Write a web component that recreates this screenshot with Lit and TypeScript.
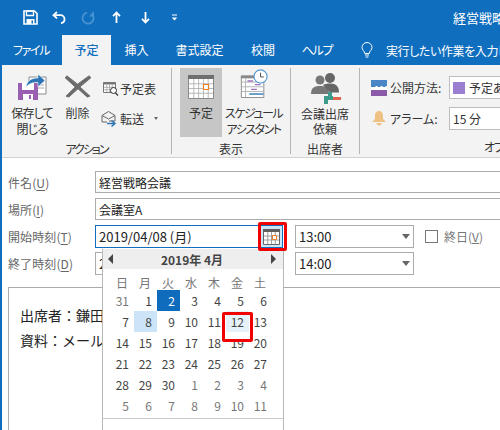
import { LitElement, html, css, svg } from "lit";
import { customElement } from "lit/decorators.js";

const calGrid = (x: number, y: number, w: number, h: number, cols: number, rows: number) => {
  const cw = w / cols, ch = h / rows;
  const lines = [];
  for (let i = 1; i < cols; i++) lines.push(svg`<line x1=${x + i * cw} y1=${y} x2=${x + i * cw} y2=${y + h} />`);
  for (let i = 1; i < rows; i++) lines.push(svg`<line x1=${x} y1=${y + i * ch} x2=${x + w} y2=${y + i * ch} />`);
  return lines;
};

const WEEK = ["日", "月", "火", "水", "木", "金", "土"];
const DAYS: [number, boolean][] = [
  [31, false],
  ...Array.from({ length: 30 }, (_, i) => [i + 1, true] as [number, boolean]),
  ...Array.from({ length: 11 }, (_, i) => [i + 1, false] as [number, boolean]),
];

@customElement("app-root")
export class AppRoot extends LitElement {
  static styles = css`
    :host {
      display: block; position: relative; width: 500px; height: 430px; overflow: hidden; background: #fff;
      font-family: "Noto Sans CJK JP", "Noto Sans", sans-serif; font-size: 12px; color: #333;
      font-feature-settings: "palt";
    }
    svg { display: block; flex: none; }
    .app { display: flex; flex-direction: column; height: 430px; }
    .top { background: #106ebe; color: #fff; flex: none; }
    .qat { height: 35px; display: flex; align-items: center; position: relative; }
    .qat svg { margin-top: -1px; }
    .q1 { margin-left: 23px; } .q2 { margin-left: 14px; } .q3 { margin-left: 14px; }
    .q4 { margin-left: 16px; } .q5 { margin-left: 20px; } .q6 { margin-left: 21px; }
    .title { margin-left: auto; font-size: 13px; white-space: nowrap; width: 47px; }
    .tabs { height: 30px; display: flex; align-items: center; }
    .tab { height: 30px; display: flex; align-items: center; justify-content: center; flex: none; line-height: 1; }
    .tab.on { background: #f3f3f3; color: #106ebe; font-weight: 500; }
    .tab.kana { letter-spacing: -1.3px; }
    .tell { display: flex; align-items: center; margin-left: 16px; white-space: nowrap; gap: 13px; letter-spacing: -.4px; }
    .body { flex: 1; display: flex; flex-direction: column; border-left: 2px solid #106ebe; min-height: 0; }
    .ribbon { height: 93px; flex: none; background: #f3f3f3; border-bottom: 1px solid #d2d2d2; box-sizing: border-box; display: flex; padding-top: 3px; color: #333; }
    .group { flex: none; height: 86px; border-right: 1px solid #b5b5b5; display: flex; flex-direction: column; box-sizing: border-box; }
    .g1 { width: 170px; } .g2 { width: 119px; } .g3 { width: 69px; }
    .group.last { border-right: 0; flex: 1; overflow: hidden; }
    .gmain { height: 69px; display: flex; }
    .glabel { margin-top: 5px; text-align: center; line-height: 14px; font-size: 12px; white-space: nowrap; }
    .glabel.kana { letter-spacing: -2px; }
    .glabel.opt-l { text-align: left; padding-left: 124px; letter-spacing: -1px; }
    .big { display: flex; flex-direction: column; align-items: center; height: 69px; box-sizing: border-box; line-height: 16px; text-align: center; white-space: nowrap; flex: none; }
    .big .ic { height: 33px; display: flex; align-items: flex-end; margin-bottom: 4px; }
    .big.sel { background: #c6c6c6; }
    .b-save { width: 48px; margin-left: 6px; letter-spacing: -.8px; }
    .b-del { width: 35px; margin-left: 4px; }
    .b-del svg { margin-bottom: 3px; }
    .b-cal { width: 42px; margin-left: 8px; }
    .b-cal .ic { height: 31px; margin-bottom: 6px; }
    .b-sch { width: 63px; }
    .b-sch .ic { height: 30px; margin-bottom: 7px; }
    .b-sch .t { letter-spacing: -1.5px; }
    .b-att { width: 68px; line-height: 15px; }
    .b-att .ic { height: 36px; margin-bottom: 2px; }
    .smalls { display: flex; flex-direction: column; margin-left: 8px; padding-top: 5px; }
    .small { display: flex; align-items: center; height: 30px; }
    .small span { margin-left: 1px; }
    .small.fw { margin-left: -2px; }
    .small.fw span { margin-left: 2px; }
    .tri-s { margin-left: 10px; width: 0; height: 0; border-left: 2.5px solid transparent; border-right: 2.5px solid transparent; border-top: 3px solid #666; }
    .opts { padding-left: 11px; padding-top: 8px; display: flex; flex-direction: column; gap: 8px; height: 69px; box-sizing: border-box; }
    .opt { display: flex; align-items: center; height: 23px; white-space: nowrap; }
    .opt .lb { width: 59px; margin-left: 3px; flex: none; }
    .drop { width: 120px; height: 23px; border: 1px solid #bdbdbd; background: #fff; box-sizing: border-box; display: flex; align-items: center; padding-left: 3px; flex: none; }
    .swatch { width: 12px; height: 12px; background: #9a7fd0; margin-right: 4px; flex: none; }
    .form { padding: 13px 0 0 6px; flex: 1; display: flex; flex-direction: column; min-height: 0; }
    .row { display: flex; align-items: center; margin-bottom: 5px; }
    .row.r3 { margin-bottom: 4px; }
    .row.r4 { margin-bottom: 0; }
    .lab { width: 87px; flex: none; color: #666; font-size: 12px; letter-spacing: 0.1px; }
    .lab u { text-underline-offset: 2px; }
    .field { height: 22px; border: 1px solid #ababab; box-sizing: border-box; flex: 1; margin-right: -20px; display: flex; align-items: center; padding-left: 3px; color: #222; font-size: 12px; }
    .date { flex: none; width: 188px; height: 23px; position: relative; color: #222; padding-left: 3px; font-size: 13px; display: flex; align-items: center; box-sizing: border-box; border: 1px solid #ababab; }
    .date.focus { border-color: #106ebe; }
    .calbtn { position: absolute; right: 0; top: 0; width: 22px; height: 21px; background: #cce4f7; display: flex; align-items: center; justify-content: center; }
    .combo { margin-left: 12px; width: 119px; height: 23px; border: 1px solid #ababab; box-sizing: border-box; display: flex; align-items: center; padding-left: 3px; color: #222; flex: none; font-size: 13px; justify-content: space-between; padding-right: 3px; }
    .tri { width: 0; height: 0; border-left: 4.5px solid transparent; border-right: 4.5px solid transparent; border-top: 5px solid #666; }
    .check { margin-left: 11px; width: 13px; height: 13px; border: 1px solid #777; box-sizing: border-box; flex: none; }
    .allday { margin-left: 6px; color: #777; white-space: nowrap; }
    .note { margin-top: 12px; flex: 1; margin-right: -20px; border: 1px solid #ababab; border-bottom: 0; padding: 15px 11px 0; font-size: 14px; line-height: 25px; color: #222; white-space: nowrap; font-feature-settings: normal; }
    .popup { position: absolute; left: 102px; top: 249px; width: 182px; height: 200px; background: #fff; border: 1px solid #b8b8b8; border-top: 0; box-sizing: border-box; color: #444; }
    .phead { height: 20px; background: #eee; display: flex; align-items: center; justify-content: space-between; padding: 0 7px 0 5px; font-weight: 700; font-size: 12px; color: #444; }
    .la { border-top: 5px solid transparent; border-bottom: 5px solid transparent; border-right: 5px solid #444; width: 0; height: 0; }
    .ra { border-top: 5px solid transparent; border-bottom: 5px solid transparent; border-left: 5px solid #444; width: 0; height: 0; }
    .grid { display: grid; grid-template-columns: repeat(7, 23px); grid-auto-rows: 21px; margin-left: 8px; }
    .wk { height: 26px; display: flex; align-items: center; justify-content: flex-end; padding-right: 6px; color: #777; }
    .d { display: flex; align-items: center; justify-content: flex-end; padding-right: 5px; font-size: 12px; color: #444; }
    .d.off { color: #777; }
    .d.sel { background: #0f6cbd; color: #fff; }
    .d.today { background: #cce4f7; }
    .d.hov { background: #e5f1fb; }
    .foot { border-top: 1px solid #ccc; margin-top: 2px; }
    .red { position: absolute; border: 3px solid #f00000; border-radius: 2px; box-sizing: border-box; }
    .red1 { left: 258px; top: 222px; width: 29px; height: 29px; }
    .red2 { left: 222px; top: 312px; width: 31px; height: 30px; }
  `;

  render() {
    const tabs: [string, number, string][] = [["ファイル", 62, "kana"], ["予定", 49, "on"], ["挿入", 51, ""], ["書式設定", 75, ""], ["校閲", 52, ""], ["ヘルプ", 56, "kana"]];
    return html`
      <div class="app">
        <div class="top">
          <div class="qat">
            <svg class="q1" width="15" height="15" viewBox="0 0 15 15"><path d="M1 1h10.500L14 3.500V14H1z" fill="none" stroke="#fff" stroke-width="1.6"/><path d="M3.500 1h7v4.500h-7z" fill="none" stroke="#fff" stroke-width="1.300"/><path d="M3.500 9h8v5h-8z" fill="#fff"/><path d="M8.500 10.500h1.500v3h-1.500z" fill="#106ebe"/></svg>
            <svg class="q2" width="15" height="15" viewBox="0 0 15 15"><path d="M5 2 1.500 5.200 5 8.400" fill="none" stroke="#fff" stroke-width="1.800"/><path d="M2 5.200h6.500a4 4 0 0 1 4 4 3.800 3.800 0 0 1-3.500 3.800" fill="none" stroke="#fff" stroke-width="1.800"/></svg>
            <svg class="q3" width="15" height="15" viewBox="0 0 15 15"><path d="M9 3a5.500 5.500 0 1 1-4.500 .5" transform="rotate(20 7.500 7.500)" fill="none" stroke="#4a93d1" stroke-width="1.800"/><path d="M13 1v5.500H8z" fill="#4a93d1"/></svg>
            <svg class="q4" width="9" height="13" viewBox="0 0 9 13"><path d="M4.500 12V2M1 5.200 4.500 1.500 8 5.200" fill="none" stroke="#fff" stroke-width="1.800"/></svg>
            <svg class="q5" width="9" height="13" viewBox="0 0 9 13"><path d="M4.500 1v10M1 7.800 4.500 11.500 8 7.800" fill="none" stroke="#fff" stroke-width="1.800"/></svg>
            <svg class="q6" width="7" height="7" viewBox="0 0 7 7"><path d="M1 .5h5v1H1z" fill="#fff"/><path d="M.8 3.500h5.400L3.500 6.500z" fill="#fff"/></svg>
            <div class="title">経営戦略会議</div>
          </div>
          <div class="tabs">
            ${tabs.map(([t, w, c]) => html`<div class="tab ${c}" style="width:${w}px">${t}</div>`)}
            <div class="tell">
              <svg width="12" height="16" viewBox="0 0 12 16"><path d="M3.800 11.500C3.500 9 1 8 1 5.500a5 5 0 0 1 10 0C11 8 8.500 9 8.200 11.500z" fill="none" stroke="#fff"/><path d="M4 13h4M4.500 15h3" stroke="#fff"/></svg>
              <span>実行したい作業を入力してください</span>
            </div>
          </div>
        </div>
        <div class="body">
          <div class="ribbon">
            <div class="group g1">
              <div class="gmain">
                <div class="big b-save">
                  <div class="ic">
                    <svg width="30" height="28" viewBox="0 0 30 28">
                      <path d="M12 4h17v17H12z" fill="#fff" stroke="#8a8a8a"/><path d="M20 9h7M20 12h7M20 15h7" stroke="#aaa"/>
                      <path d="M1 10h20v17H1z" fill="#9a5fb0"/><path d="M5 10h12v7H5z" fill="#fff"/><path d="M6 21h10v6H6z" fill="#fff"/><path d="M12 22h2v4h-2z" fill="#9a5fb0"/>
                      <path d="M9 14C10 7 15 5 21 5V1l7 6.500-7 6.500V9.500C16 9.500 13 10 9 14z" fill="#2e75b6" stroke="#fff" stroke-width=".6"/>
                    </svg>
                  </div>保存して<br>閉じる
                </div>
                <div class="big b-del">
                  <div class="ic"><svg width="30" height="24" viewBox="0 0 30 26"><path d="M3 2 14.500 11 27 2l2 2-12 10 11 10-3 1L15 16 5 25 2 24l10-10L1 4z" fill="#6b6b6b" stroke="#6b6b6b" stroke-linejoin="round"/></svg></div>削除
                </div>
                <div class="smalls">
                  <div class="small">
                    <svg width="16" height="15" viewBox="0 0 16 15"><path d="M.5 1.500h12v10H.5z" fill="#fff" stroke="#777"/><path d="M.5 1.500h12v2H.5z" fill="#777"/><g stroke="#999" stroke-width=".7">${calGrid(1, 4, 11, 7, 4, 3)}</g><circle cx="10.500" cy="9.500" r="3" fill="#fff" stroke="#333"/><path d="M12.500 12l2.500 2.500" stroke="#333" stroke-width="1.300"/></svg>
                    <span>予定表</span>
                  </div>
                  <div class="small fw">
                    <svg width="17" height="17" viewBox="0 0 17 17"><path d="M1 5.500 7.500 1.500 14 5.500V11H8M1 5.500V12h5" fill="none" stroke="#666"/><path d="M1 5.500 7.500 9 14 5.500" fill="none" stroke="#666"/><path d="M6 13.500h7.500M10.500 10.500l3.500 3-3.500 3" fill="none" stroke="#2e75b6" stroke-width="1.500"/></svg>
                    <span>転送</span>
                    <i class="tri-s"></i>
                  </div>
                </div>
              </div>
              <div class="glabel kana">アクション</div>
            </div>
            <div class="group g2">
              <div class="gmain">
                <div class="big sel b-cal">
                  <div class="ic">
                    <svg width="26" height="24" viewBox="0 0 26 24"><path d="M.5 .5h25v23H.5z" fill="#fff" stroke="#8a8a8a"/><path d="M0 0h26v4H0z" fill="#6f6f6f"/><g stroke="#aaa" stroke-width=".8">${calGrid(1, 4, 24, 19, 5, 4)}</g><path d="M15.500 9.500h5v5h-5z" fill="#fff" stroke="#e97f25" stroke-width="1.200"/></svg>
                  </div>予定
                </div>
                <div class="big b-sch">
                  <div class="ic">
                    <svg width="30" height="29" viewBox="0 0 30 31"><path d="M1.500 7.500h24v23h-24z" fill="#fff" stroke="#8a8a8a"/><path d="M1 7h25v3H1z" fill="#8a8a8a"/><path d="M1.500 14h24M1.500 19h24M1.500 24h24M6 10v20" stroke="#b0b0b0"/><path d="M8 12h6v1.500H8zM16 16h6v1.500h-6zM12 21h6v1.500h-6z" fill="#a070c0"/><path d="M10 26h15v1.500H10z" fill="#2e75b6"/><circle cx="22" cy="8" r="7" fill="#fff" stroke="#5b9bd5" stroke-width="1.300"/><path d="M22 4v4.500h3.500" fill="none" stroke="#444"/></svg>
                  </div><span class="t">スケジュール<br>アシスタント</span>
                </div>
              </div>
              <div class="glabel">表示</div>
            </div>
            <div class="group g3">
              <div class="gmain">
                <div class="big b-att">
                  <div class="ic">
                    <svg width="32" height="31" viewBox="0 0 32 31"><circle cx="11" cy="7" r="4.500" fill="#777"/><path d="M2 21c0-7 4-8 9-8s9 1 9 8z" fill="#777"/><circle cx="21" cy="5" r="5" fill="#666"/><path d="M14 12c2-1 4-1.500 7-1.500 6 0 9 3 9 9h-9z" fill="#666"/><path d="M15 23h4v-4h4v4h1v4h-5v4h-4z" fill="#3d9b8c"/><path d="M24 24h8v3h-8z" fill="#e0664b"/></svg>
                  </div>会議出席<br>依頼
                </div>
              </div>
              <div class="glabel">出席者</div>
            </div>
            <div class="group last">
              <div class="opts">
                <div class="opt">
                  <svg width="16" height="16" viewBox="0 0 16 16"><path d="M0 0h16v7H0z" fill="#4a86c5"/><path d="M0 7h16v3H0z" fill="#fff"/><path d="M0 10h16v6H0z" fill="#8a5aa8"/><path d="M2 10l3-4h2l-3 4zM7 10l3-4h2l-3 4zM12 10l3-4h1v1l-2 3z" fill="#fff"/></svg>
                  <span class="lb">公開方法:</span>
                  <div class="drop"><i class="swatch"></i>予定あり</div>
                </div>
                <div class="opt">
                  <svg width="16" height="17" viewBox="0 0 16 17"><path d="M8 1c3 0 4 2.500 4 5v3l3 3H1l3-3V6c0-2.500 1-5 4-5z" fill="#eec185"/><path d="M5.500 13h5a2.500 2.500 0 0 1-5 0z" fill="#eec185"/></svg>
                  <span class="lb">アラーム:</span>
                  <div class="drop">15 分</div>
                </div>
              </div>
              <div class="glabel opt-l">オプション</div>
            </div>
          </div>
          <div class="form">
            <div class="row"><div class="lab">件名(<u>U</u>)</div><div class="field">経営戦略会議</div></div>
            <div class="row"><div class="lab">場所(<u>I</u>)</div><div class="field">会議室A</div></div>
            <div class="row r3">
              <div class="lab">開始時刻(<u>T</u>)</div>
              <div class="date focus">2019/04/08 (月)
                <div class="calbtn">
                  <svg width="17" height="16" viewBox="0 0 17 16"><path d="M.5 .5h16v15H.5z" fill="#fff" stroke="#666"/><path d="M0 0h17v3H0z" fill="#5f5f5f"/><g stroke="#8a8a8a" stroke-width=".8">${calGrid(1, 3, 15, 12, 4, 3)}</g><path d="M9.500 6.500h4v4h-4z" fill="#fff" stroke="#e97f25"/></svg>
                </div>
              </div>
              <div class="combo">13:00<i class="tri"></i></div>
              <div class="check"></div>
              <div class="allday">終日(<u>V</u>)</div>
            </div>
            <div class="row r4">
              <div class="lab">終了時刻(<u>D</u>)</div>
              <div class="date">2019/04/08 (月)</div>
              <div class="combo">14:00<i class="tri"></i></div>
            </div>
            <div class="note">出席者\uFF1A鎌田<br>資料\uFF1Aメール</div>
          </div>
        </div>
      </div>
      <div class="popup">
        <div class="phead"><i class="la"></i><span>2019年 4月</span><i class="ra"></i></div>
        <div class="grid">
          ${WEEK.map((w) => html`<div class="wk">${w}</div>`)}
          ${DAYS.map(([d, cur]) => {
            const c = ["d", cur ? "" : "off", cur && d === 2 ? "sel" : "", cur && d === 8 ? "today" : "", cur && d === 12 ? "hov" : ""].join(" ");
            return html`<div class=${c}>${d}</div>`;
          })}
        </div>
        <div class="foot"></div>
      </div>
      <div class="red red1"></div>
      <div class="red red2"></div>
    `;
  }
}
